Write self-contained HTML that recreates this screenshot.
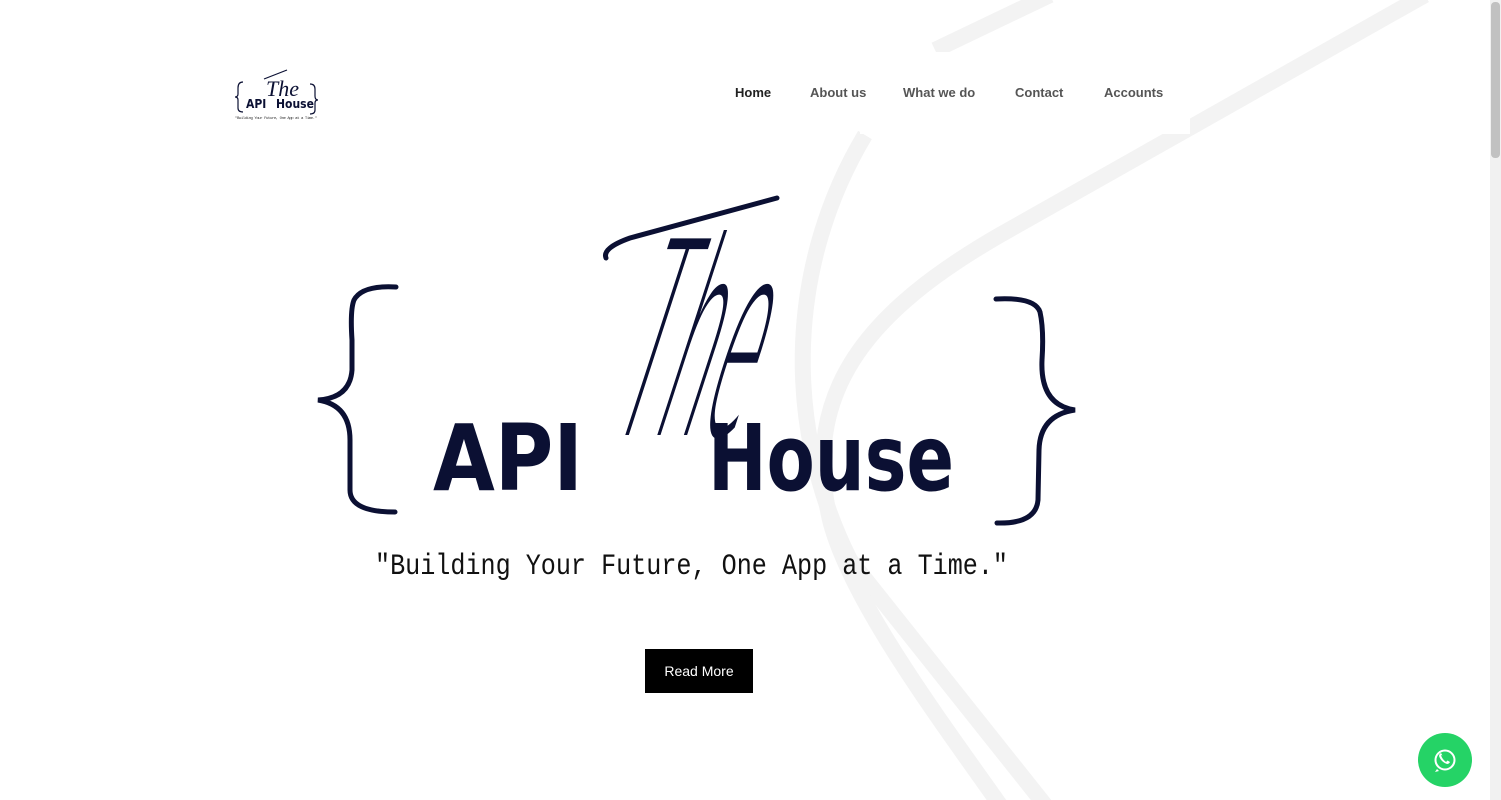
<!DOCTYPE html>
<html><head><meta charset="utf-8"><style>
html,body{margin:0;padding:0;width:1501px;height:800px;overflow:hidden;background:#fff;font-family:"Liberation Sans",sans-serif}
.nav{position:absolute;top:85px;font-size:13px;font-weight:bold;color:#555}
.btn{position:absolute;left:645px;top:649px;width:108px;height:44px;background:#000;color:#fff;font-size:14px;line-height:44px;text-align:center}
</style></head><body>
<svg width="1501" height="800" style="position:absolute;left:0;top:0">
<g fill="none" stroke="#f3f3f3" stroke-width="16">
<path d="M1050,-5 L935,50"/>
<path d="M865,135 C790,260 780,420 850,560 L1045,805"/>
<path d="M1425,-5 L1000,235 C870,310 800,390 830,520 C850,600 940,720 1000,805"/>
</g>
<rect x="860" y="52" width="330" height="82" fill="#fff"/>
<rect x="1490" y="0" width="11" height="800" fill="#f1f1f1"/>
<rect x="1491" y="2" width="9" height="156" rx="4" fill="#c1c1c1"/>
<g fill="none" stroke="#0b1033" stroke-width="1.2">
<path d="M243,82 Q238,82 238,88 L238,94 Q238,97 235,97 Q238,97 238,100 L238,108 Q238,112 243,112"/>
<path d="M310,84 Q315,84 315,89 L315,96 Q315,100 318,100 Q315,100 315,103 L315,110 Q315,114 310,114"/>
<path d="M264,79 L287,70"/>
</g>
<text x="266" y="96" font-family="Liberation Serif" font-style="italic" font-size="22" fill="#0b1033">The</text>
<text x="246" y="108" font-family="DejaVu Sans Condensed" font-weight="bold" font-size="12" fill="#0b1033">API</text>
<text x="276" y="108" font-family="DejaVu Sans Condensed" font-weight="bold" font-size="12" fill="#0b1033">House</text>
<text x="235" y="119" font-family="Liberation Mono" font-size="4" fill="#333" textLength="82">"Building Your Future, One App at a Time."</text>
<g fill="none" stroke="#0b1033" stroke-width="5" stroke-linecap="round">
<path d="M396,287 Q362,285 354,300 Q350,310 352,340 L352,370 Q350,398 318,400 Q350,405 350,440 L350,490 Q350,512 395,512"/>
<path d="M996,299 Q1035,297 1040,312 Q1044,330 1042,360 Q1040,405 1075,410 Q1040,415 1039,450 L1038,500 Q1036,524 997,523"/>
<path d="M606,258 Q602,248 630,238 L777,198"/>
</g>
<g transform="translate(605,435) skewX(-18) scale(0.38,1.42)">
<text x="0" y="0" font-family="DejaVu Sans" font-weight="200" font-size="190" fill="#0b1033">The</text>
</g>
<text x="433" y="490" font-family="DejaVu Sans Condensed" font-weight="bold" font-size="92" fill="#0b1033" textLength="150" lengthAdjust="spacingAndGlyphs">API</text>
<text x="708" y="490" font-family="DejaVu Sans Condensed" font-weight="bold" font-size="92" fill="#0b1033" textLength="246" lengthAdjust="spacingAndGlyphs">House</text>
<text x="375" y="574" font-family="Liberation Mono" font-size="30" fill="#111" textLength="633" lengthAdjust="spacingAndGlyphs">"Building Your Future, One App at a Time."</text>
<circle cx="1445" cy="760" r="27" fill="#25d366"/>
<circle cx="1445" cy="760" r="9.5" fill="none" stroke="#fff" stroke-width="2"/>
<path d="M1437,769 L1435,772 L1439,771 Z" fill="#fff"/>
<path d="M1441,755 q1,4 5,7 l1.5,-1.5 l2.5,1.5 q-1,2 -3,2 q-6,-2 -8,-8 q0,-2 2,-3 l1.5,2.5 z" fill="#fff"/>
</svg>
<div class="nav" style="left:735px;color:#222">Home</div>
<div class="nav" style="left:810px">About us</div>
<div class="nav" style="left:903px">What we do</div>
<div class="nav" style="left:1015px">Contact</div>
<div class="nav" style="left:1104px">Accounts</div>
<div class="btn">Read More</div>
</body></html>
